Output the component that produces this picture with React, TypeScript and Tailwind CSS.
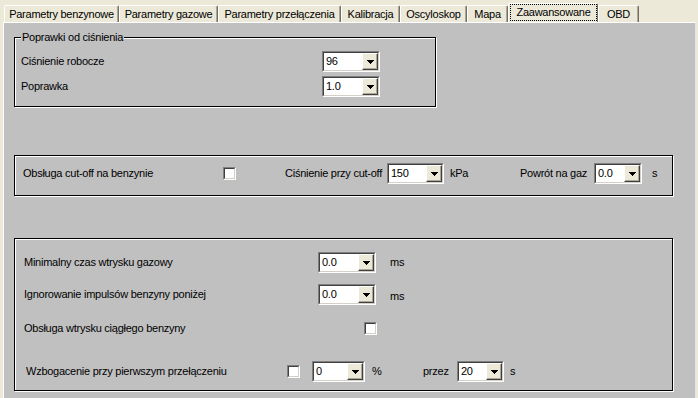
import React from "react";

function Arrow() {
  return (
    <svg width="7" height="4" viewBox="0 0 7 4" shapeRendering="crispEdges">
      <path d="M0 0h7v1H0zM1 1h5v1H1zM2 2h3v1H2zM3 3h1v1H3z" fill="#000" />
    </svg>
  );
}

function Combo({ value, w }: { value: string; w: string }) {
  return (
    <div
      className={`${w} flex h-[21px] shrink-0 border border-t-[#808080] border-l-[#808080] border-b-white border-r-white`}
    >
      <div className="flex flex-1 border border-t-[#404040] border-l-[#404040] border-b-[#d4d0c8] border-r-[#d4d0c8] bg-white">
        <span className="flex-1 pl-[2px] leading-[17px] whitespace-nowrap overflow-hidden">{value}</span>
        <div className="flex w-[16px] items-center justify-center border border-t-white border-l-white border-b-[#404040] border-r-[#404040] bg-[#ece9d8] shadow-[inset_-1px_-1px_0_#aca899]">
          <Arrow />
        </div>
      </div>
    </div>
  );
}

function Check() {
  return (
    <div className="h-[13px] w-[13px] shrink-0 border border-t-[#808080] border-l-[#808080] border-b-white border-r-white">
      <div className="h-full w-full border border-t-[#404040] border-l-[#404040] border-b-[#d4d0c8] border-r-[#d4d0c8] bg-white" />
    </div>
  );
}

const tabs: { label: string; w: string; active?: boolean }[] = [
  { label: "Parametry benzynowe", w: "w-[115px]" },
  { label: "Parametry gazowe", w: "w-[99px]" },
  { label: "Parametry przełączenia", w: "w-[123px]" },
  { label: "Kalibracja", w: "w-[59px]" },
  { label: "Oscyloskop", w: "w-[67px]" },
  { label: "Mapa", w: "w-[41px]" },
  { label: "Zaawansowane", w: "w-[90px]", active: true },
  { label: "OBD", w: "w-[41px]" },
];

export default function App() {
  return (
    <div className="flex h-[398px] w-[698px] flex-col overflow-hidden bg-[#ece9d8] font-['Liberation_Sans',Arial,sans-serif] text-[11px] tracking-[-0.25px] text-black">
      {/* tab strip */}
      <div className="flex h-[22px] shrink-0 items-end pl-[4px]">
        {tabs.map((t) =>
          t.active ? (
            <div
              key={t.label}
              className={`${t.w} flex h-[19px] rounded-t-[2px] border-l border-t border-white border-r border-r-[#716f64] bg-[#ece9d8] pb-[1px] pl-[1px]`}
            >
              <div className="flex flex-1 items-center justify-center border border-dotted border-black leading-[13px] whitespace-nowrap">
                {t.label}
              </div>
            </div>
          ) : (
            <div
              key={t.label}
              className={`${t.w} flex h-[17px] items-center justify-center rounded-t-[2px] border-l border-t border-white border-r border-r-[#716f64] bg-[#ece9d8] shadow-[inset_-1px_0_0_#aca899] whitespace-nowrap`}
            >
              {t.label}
            </div>
          )
        )}
      </div>

      {/* panel */}
      <div className="ml-[3px] w-[693px] flex-1 border-l border-t border-white border-r border-r-[#e4e4e4] bg-[#c0c0c0] pl-[10px] pt-[14px]">
        {/* group 1 */}
        <div className="relative h-[70px] w-[422px] border border-black pl-[6px] pt-[13px] shadow-[1px_1px_0_#fff,inset_1px_1px_0_#fff]">
          <span className="absolute left-[6px] top-[-7px] bg-[#c0c0c0] px-[1px] leading-[13px] whitespace-nowrap">
            Poprawki od ciśnienia
          </span>
          <div className="flex h-[21px] items-center">
            <span className="w-[301px] shrink-0">Ciśnienie robocze</span>
            <Combo value="96" w="w-[58px]" />
          </div>
          <div className="mt-[4px] flex h-[21px] items-center">
            <span className="w-[301px] shrink-0">Poprawka</span>
            <Combo value="1.0" w="w-[58px]" />
          </div>
        </div>

        {/* group 2 */}
        <div className="mt-[48px] h-[41px] w-[659px] border border-black pl-[8px] pt-[7px] shadow-[1px_1px_0_#fff,inset_1px_1px_0_#fff]">
          <div className="flex h-[21px] items-center whitespace-nowrap">
            <span className="w-[200px] shrink-0">Obsługa cut-off na benzynie</span>
            <Check />
            <span className="ml-[49px] w-[102px] shrink-0">Ciśnienie przy cut-off</span>
            <Combo value="150" w="w-[57px]" />
            <span className="ml-[6px] w-[70px] shrink-0">kPa</span>
            <span className="w-[74px] shrink-0">Powrót na gaz</span>
            <Combo value="0.0" w="w-[48px]" />
            <span className="ml-[10px]">s</span>
          </div>
        </div>

        {/* group 3 */}
        <div className="mt-[42px] h-[153px] w-[659px] border border-black pl-[9px] pt-[13px] shadow-[1px_1px_0_#fff,inset_1px_1px_0_#fff] whitespace-nowrap">
          <div className="flex h-[21px] items-center">
            <span className="w-[294px] shrink-0">Minimalny czas wtrysku gazowy</span>
            <Combo value="0.0" w="w-[58px]" />
            <span className="ml-[14px]">ms</span>
          </div>
          <div className="mt-[11px] flex h-[21px] items-center">
            <span className="w-[294px] shrink-0">Ignorowanie impulsów benzyny poniżej</span>
            <Combo value="0.0" w="w-[58px]" />
            <span className="ml-[14px] pt-[3px]">ms</span>
          </div>
          <div className="mt-[13px] flex h-[21px] items-center">
            <span className="w-[340px] shrink-0">Obsługa wtrysku ciągłego benzyny</span>
            <Check />
          </div>
          <div className="mt-[22px] flex h-[21px] items-center pl-[2px]">
            <span className="w-[261px] shrink-0">Wzbogacenie przy pierwszym przełączeniu</span>
            <Check />
            <div className="ml-[12px]">
              <Combo value="0" w="w-[53px]" />
            </div>
            <span className="ml-[7px] w-[51px] shrink-0">%</span>
            <span className="w-[34px] shrink-0">przez</span>
            <Combo value="20" w="w-[47px]" />
            <span className="ml-[6px]">s</span>
          </div>
        </div>
      </div>
    </div>
  );
}
